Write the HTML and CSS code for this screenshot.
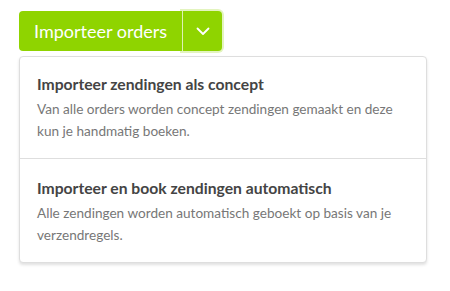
FILE: index.html
```html
<!DOCTYPE html>
<html lang="nl">

<head>
  <meta charset="UTF-8">
  <meta name="viewport" content="width=device-width, initial-scale=1.0">
  <title>Importeer orders</title>
  <link rel="stylesheet" href="styles.css">
</head>

<body>
  <div class="import">
    <div class="split-button">
      <button class="split-main">Importeer orders</button>
      <button class="split-toggle" aria-label="Meer opties">
        <svg width="14" height="9" viewBox="0 0 14 9">
          <path d="M1.5 1.5 L7 7 L12.5 1.5" fill="none" stroke="#fff" stroke-width="1.8" stroke-linecap="round" stroke-linejoin="round"/>
        </svg>
      </button>
    </div>

    <!-- Dropdown met import opties -->
    <ul class="dropdown">
      <li class="dropdown-item">
        <h3>Importeer zendingen als concept</h3>
        <p>Van alle orders worden concept zendingen gemaakt en deze kun je handmatig boeken.</p>
      </li>
      <li class="dropdown-item">
        <h3>Importeer en book zendingen automatisch</h3>
        <p>Alle zendingen worden automatisch geboekt op basis van je verzendregels.</p>
      </li>
    </ul>
  </div>
</body>

</html>
```

FILE: styles.css
```css
body {
  font-family: 'Lato', 'Open Sans', sans-serif;
  margin: 0;
  padding: 11px 19px;
  background-color: #ffffff;
}

.import {
  width: 408px;
}

.split-button {
  display: inline-flex;
  height: 40px;
}

.split-button button {
  border: none;
  background-color: #8fd400;
  color: #ffffff;
  font-family: inherit;
  cursor: pointer;
}

.split-main {
  padding: 0 15px;
  font-size: 18px;
  border-radius: 4px 0 0 4px;
}

.split-toggle {
  width: 40px;
  padding: 0;
  border-left: 1px solid rgba(255, 255, 255, 0.7) !important;
  border-radius: 0 4px 4px 0;
  box-shadow: 0 0 0 2px rgba(143, 212, 0, 0.25);
  display: flex;
  align-items: center;
  justify-content: center;
}

.dropdown {
  list-style: none;
  margin: 5px 0 0;
  padding: 0;
  background-color: #ffffff;
  border: 1px solid #dedede;
  border-radius: 4px;
  box-shadow: 0 2px 3px rgba(0, 0, 0, 0.12);
}

.dropdown-item {
  padding: 17px 17px 16px;
}

.dropdown-item + .dropdown-item {
  border-top: 1px solid #dedede;
  padding-top: 19px;
}

.dropdown-item h3 {
  margin: 0 0 4px;
  font-size: 15.7px;
  line-height: 20px;
  font-weight: bold;
  color: #444444;
}

.dropdown-item p {
  margin: 0;
  font-size: 13.6px;
  line-height: 22px;
  color: #777777;
}
```
